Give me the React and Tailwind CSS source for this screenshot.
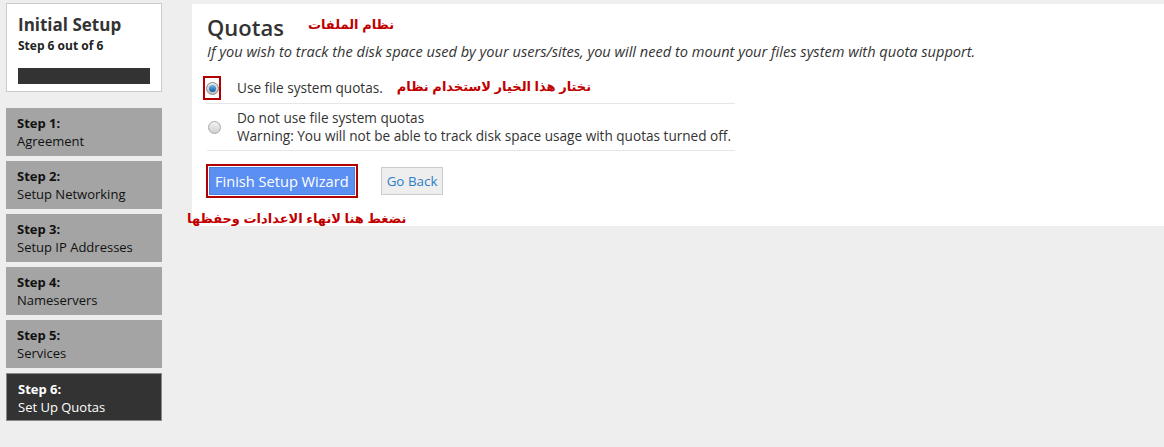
// Initial Setup wizard - quotas step
const steps = [
  { n: 1, name: 'Agreement' },
  { n: 2, name: 'Setup Networking' },
  { n: 3, name: 'Setup IP Addresses' },
  { n: 4, name: 'Nameservers' },
  { n: 5, name: 'Services' },
  { n: 6, name: 'Set Up Quotas', active: true },
];

const font = { fontFamily: '"Open Sans", "Liberation Sans", sans-serif' };
const arabic = 'font-["Liberation_Sans","DejaVu_Sans",sans-serif] font-bold text-[#c00000]';

function Radio({ checked }) {
  return (
    <span
      className={
        'inline-flex w-[13px] h-[13px] rounded-full items-center justify-center border ' +
        (checked
          ? 'border-[#8a8a8a] bg-gradient-to-b from-[#e8e8e8] to-[#bdbdbd]'
          : 'border-[#a8a8a8] bg-gradient-to-b from-[#f4f4f4] to-[#cfcfcf]')
      }
    >
      {checked && <span className="w-[7px] h-[7px] rounded-full bg-gradient-to-b from-[#6fb4ea] to-[#0d5d9c]" />}
    </span>
  );
}

export default function App() {
  return (
    <div className="min-h-[447px] bg-[#eeeeee] flex text-[#333]" style={font}>
      {/* Sidebar */}
      <div className="w-[156px] ml-[6px] mt-[3px] shrink-0 flex flex-col">
        <div className="bg-white border border-[#cccccc] pl-[11px] pr-[12px] pt-[10px] pb-[10px] h-[89px]">
          <h1 className="text-[17px] font-bold leading-[22px] text-[#333]">Initial Setup</h1>
          <p className="text-[12px] font-bold leading-[16px] mt-[2px] text-[#222]">Step 6 out of 6</p>
          <div className="mt-[14px] h-[16px] w-[132px] bg-[#333333]" />
        </div>

        <div className="mt-[16px] flex flex-col gap-[5px]">
          {steps.map((s) => (
            <div
              key={s.n}
              className={
                'h-[48px] pl-[11px] pt-[6px] text-[13px] leading-[18px] ' +
                (s.active ? 'bg-[#333333] border border-[#888] text-white pl-[10px] pt-[5px]' : 'bg-[#a4a4a4] text-[#111]')
              }
            >
              <div className="font-bold">Step {s.n}:</div>
              <div>{s.name}</div>
            </div>
          ))}
        </div>
      </div>

      {/* Main panel */}
      <div className="flex-1 ml-[30px] mt-[4px] self-start h-[222px] bg-white pl-[15px] pt-[10px] relative">
        <div className="flex items-center h-[26px]">
          <h2 className="text-[22px] font-semibold leading-[26px] text-[#333]">Quotas</h2>
          <span className={'ml-[24px] -mt-[4px] text-[13px] ' + arabic} dir="rtl">نظام الملفات</span>
        </div>
        <p className="italic text-[14.6px] leading-[18px] mt-[2px] text-[#333]">
          If you wish to track the disk space used by your users/sites, you will need to mount your files system with quota support.
        </p>

        <div className="w-[528px] mt-[13px] text-[13.6px] leading-[18px]">
          <div className="flex items-center h-[31px] border-b border-[#e6e6e6] -ml-[1px]">
            <div className="w-[18px] h-[24px] border-2 border-[#b00000] flex items-center justify-center -ml-[3px]">
              <Radio checked />
            </div>
            <span className="ml-[16px]">Use file system quotas.</span>
            <span className={'ml-[14px] -mt-[2px] text-[13px] ' + arabic} dir="rtl">نختار هذا الخيار لاستخدام نظام</span>
          </div>
          <div className="flex items-center h-[47px] border-b border-[#e6e6e6]">
            <div className="w-[13px] flex justify-center ml-[1px]">
              <Radio />
            </div>
            <div className="ml-[16px] leading-[18px]">
              <div>Do not use file system quotas</div>
              <div>Warning: You will not be able to track disk space usage with quotas turned off.</div>
            </div>
          </div>
        </div>

        <div className="flex items-center mt-[13px] -ml-[1px]">
          <div className="border-2 border-[#b00000] p-[1px]">
            <button className="h-[28px] px-[5px] bg-[#5b8ff2] border border-[#4a7fe0] text-white text-[14.6px] leading-[26px]">
              Finish Setup Wizard
            </button>
          </div>
          <button className="ml-[23px] h-[28px] px-[5px] bg-[#eeeeee] border border-[#cccccc] text-[#2a7fc7] text-[13.4px] leading-[26px]">
            Go Back
          </button>
        </div>

        <span className={'absolute left-[-5px] top-[206px] text-[13px] leading-[18px] ' + arabic} dir="rtl">
          نضغط هنا لانهاء الاعدادات وحفظها
        </span>
      </div>
    </div>
  );
}
